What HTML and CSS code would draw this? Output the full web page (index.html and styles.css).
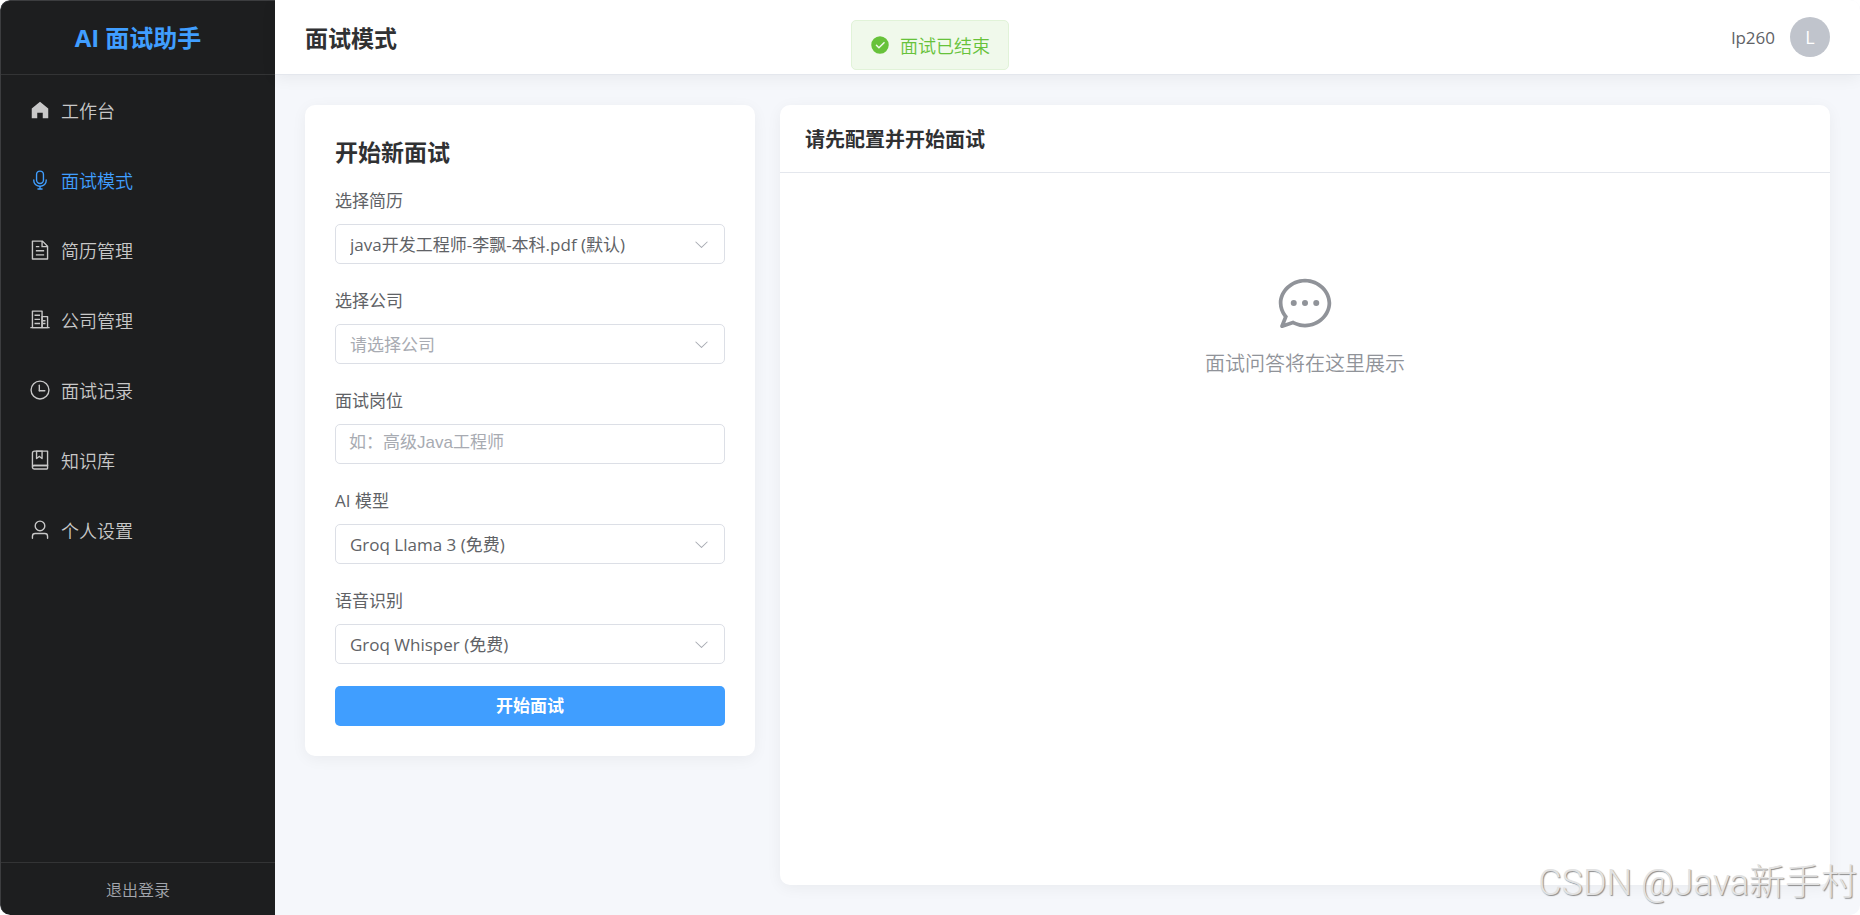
FILE: index.html
```html
<!DOCTYPE html>
<html lang="zh-CN">
  <head>
    <meta charset="UTF-8" />
    <meta name="viewport" content="width=device-width, initial-scale=1.0" />
    <title>AI 面试助手 - 面试模式</title>
    <link rel="stylesheet" href="styles.css">
  </head>
  <body>
    <div class="app">
      <!-- Sidebar -->
      <aside class="sidebar">
        <div class="logo">AI 面试助手</div>
        <nav class="menu">
          <a href="#" class="menu-item">
            <svg class="icon" viewBox="0 0 1024 1024"><path d="M512 128 128 447.936V896h255.936V640H640v256h255.936V447.936z" /></svg>
            <span>工作台</span>
          </a>
          <a href="#" class="menu-item active" aria-current="page">
            <svg class="icon" viewBox="0 0 1024 1024"><path d="M512 128a128 128 0 0 0-128 128v256a128 128 0 1 0 256 0V256a128 128 0 0 0-128-128m0-64a192 192 0 0 1 192 192v256a192 192 0 1 1-384 0V256A192 192 0 0 1 512 64m-32 832v-64a288 288 0 0 1-288-288v-32a32 32 0 0 1 64 0v32a224 224 0 0 0 224 224h64a224 224 0 0 0 224-224v-32a32 32 0 1 1 64 0v32a288 288 0 0 1-288 288v64h64a32 32 0 1 1 0 64H416a32 32 0 1 1 0-64z" /></svg>
            <span>面试模式</span>
          </a>
          <a href="#" class="menu-item">
            <svg class="icon" viewBox="0 0 1024 1024"><path d="M832 384H576V128H192v768h640zm-26.496-64L640 154.496V320zM160 64h480l256 256v608a32 32 0 0 1-32 32H160a32 32 0 0 1-32-32V96a32 32 0 0 1 32-32m160 448h384v64H320zm0-192h160v64H320zm0 384h384v64H320z" /></svg>
            <span>简历管理</span>
          </a>
          <a href="#" class="menu-item">
            <svg class="icon" viewBox="0 0 1024 1024">
              <path d="M192 128v704h384V128zm-32-64h448a32 32 0 0 1 32 32v768a32 32 0 0 1-32 32H160a32 32 0 0 1-32-32V96a32 32 0 0 1 32-32" />
              <path d="M256 256h256v64H256zm0 192h256v64H256zm0 192h256v64H256zm384-128h128v64H640zm0 128h128v64H640zM64 832h896v64H64z" />
              <path d="M640 384v448h192V384zm-32-64h256a32 32 0 0 1 32 32v512a32 32 0 0 1-32 32H608a32 32 0 0 1-32-32V352a32 32 0 0 1 32-32" />
            </svg>
            <span>公司管理</span>
          </a>
          <a href="#" class="menu-item">
            <svg class="icon" viewBox="0 0 1024 1024">
              <path d="M512 896a384 384 0 1 0 0-768 384 384 0 0 0 0 768m0 64a448 448 0 1 1 0-896 448 448 0 0 1 0 896" />
              <path d="M480 256a32 32 0 0 1 32 32v256a32 32 0 0 1-64 0V288a32 32 0 0 1 32-32" />
              <path d="M480 512h256q32 0 32 32t-32 32H480q-32 0-32-32t32-32" />
            </svg>
            <span>面试记录</span>
          </a>
          <a href="#" class="menu-item">
            <svg class="icon" viewBox="0 0 1024 1024">
              <path d="M192 736h640V128H256a64 64 0 0 0-64 64zm64-672h608a32 32 0 0 1 32 32v672a32 32 0 0 1-32 32H160l-32 57.536V192A128 128 0 0 1 256 64" />
              <path d="M240 800a48 48 0 1 0 0 96h592v-96zm0-64h656v160a64 64 0 0 1-64 64H240a112 112 0 0 1 0-224m144-608v250.88l96-76.8 96 76.8V128zm-64-64h320v381.44a32 32 0 0 1-51.968 24.96L480 384l-108.032 86.4A32 32 0 0 1 320 445.44z" />
            </svg>
            <span>知识库</span>
          </a>
          <a href="#" class="menu-item">
            <svg class="icon" viewBox="0 0 1024 1024"><path d="M512 512a192 192 0 1 0 0-384 192 192 0 0 0 0 384m0 64a256 256 0 1 1 0-512 256 256 0 0 1 0 512m320 320v-96a96 96 0 0 0-96-96H288a96 96 0 0 0-96 96v96a32 32 0 1 1-64 0v-96a160 160 0 0 1 160-160h448a160 160 0 0 1 160 160v96a32 32 0 1 1-64 0" /></svg>
            <span>个人设置</span>
          </a>
        </nav>
        <div class="sidebar-footer">
          <button type="button" class="btn-logout">退出登录</button>
        </div>
      </aside>

      <div class="page">
        <header class="topbar">
          <h1>面试模式</h1>
          <div class="user">
            <span>lp260</span>
            <span class="avatar">L</span>
          </div>
        </header>

        <main class="content">
          <!-- Interview setup -->
          <form class="card setup">
            <h2>开始新面试</h2>
            <div class="form-item">
              <label for="resume">选择简历</label>
              <div class="select">
                <select id="resume">
                  <option>java开发工程师-李飘-本科.pdf (默认)</option>
                </select>
                <svg class="arrow" viewBox="0 0 1024 1024"><path d="M831.872 340.864 512 652.672 192.128 340.864a30.592 30.592 0 0 0-42.752 0 29.12 29.12 0 0 0 0 41.6L489.664 714.24a32 32 0 0 0 44.672 0l340.288-331.712a29.12 29.12 0 0 0 0-41.728 30.592 30.592 0 0 0-42.752 0z" /></svg>
              </div>
            </div>
            <div class="form-item">
              <label for="company">选择公司</label>
              <div class="select">
                <select id="company" class="empty">
                  <option value="">请选择公司</option>
                </select>
                <svg class="arrow" viewBox="0 0 1024 1024"><path d="M831.872 340.864 512 652.672 192.128 340.864a30.592 30.592 0 0 0-42.752 0 29.12 29.12 0 0 0 0 41.6L489.664 714.24a32 32 0 0 0 44.672 0l340.288-331.712a29.12 29.12 0 0 0 0-41.728 30.592 30.592 0 0 0-42.752 0z" /></svg>
              </div>
            </div>
            <div class="form-item">
              <label for="position">面试岗位</label>
              <input type="text" id="position" placeholder="如：高级Java工程师" />
            </div>
            <div class="form-item">
              <label for="model">AI 模型</label>
              <div class="select">
                <select id="model">
                  <option>Groq Llama 3 (免费)</option>
                </select>
                <svg class="arrow" viewBox="0 0 1024 1024"><path d="M831.872 340.864 512 652.672 192.128 340.864a30.592 30.592 0 0 0-42.752 0 29.12 29.12 0 0 0 0 41.6L489.664 714.24a32 32 0 0 0 44.672 0l340.288-331.712a29.12 29.12 0 0 0 0-41.728 30.592 30.592 0 0 0-42.752 0z" /></svg>
              </div>
            </div>
            <div class="form-item">
              <label for="speech">语音识别</label>
              <div class="select">
                <select id="speech">
                  <option>Groq Whisper (免费)</option>
                </select>
                <svg class="arrow" viewBox="0 0 1024 1024"><path d="M831.872 340.864 512 652.672 192.128 340.864a30.592 30.592 0 0 0-42.752 0 29.12 29.12 0 0 0 0 41.6L489.664 714.24a32 32 0 0 0 44.672 0l340.288-331.712a29.12 29.12 0 0 0 0-41.728 30.592 30.592 0 0 0-42.752 0z" /></svg>
              </div>
            </div>
            <button type="button" class="btn-start">开始面试</button>
          </form>

          <!-- Questions and answers -->
          <section class="card session">
            <h2>请先配置并开始面试</h2>
            <div class="empty-state">
              <svg class="chat-icon" viewBox="0 0 1024 1024">
                <path d="m174.72 855.68 135.296-45.12 23.68 11.84C388.096 849.536 448.576 864 512 864c211.84 0 384-166.784 384-352S723.84 160 512 160 128 326.784 128 512c0 69.12 24.96 139.264 70.848 199.232l22.08 28.8-46.272 115.584zm-45.248 82.56A32 32 0 0 1 89.6 896l58.368-145.92C94.72 680.32 64 596.864 64 512 64 299.904 256 96 512 96s448 203.904 448 416-192 416-448 416a461.056 461.056 0 0 1-206.912-48.384l-175.616 58.56z" />
                <path d="M512 563.2a51.2 51.2 0 1 1 0-102.4 51.2 51.2 0 0 1 0 102.4m192 0a51.2 51.2 0 1 1 0-102.4 51.2 51.2 0 0 1 0 102.4m-384 0a51.2 51.2 0 1 1 0-102.4 51.2 51.2 0 0 1 0 102.4" />
              </svg>
              <p>面试问答将在这里展示</p>
            </div>
          </section>
        </main>
      </div>

      <div class="message" role="status">
        <svg class="message-icon" viewBox="0 0 1024 1024"><path d="M512 64a448 448 0 1 1 0 896 448 448 0 0 1 0-896m-55.808 536.384-99.52-99.584a38.4 38.4 0 1 0-54.336 54.336l126.72 126.72a38.272 38.272 0 0 0 54.336 0l262.4-262.464a38.4 38.4 0 1 0-54.272-54.336z" /></svg>
        <span>面试已结束</span>
      </div>
      <div class="watermark">CSDN @Java新手村</div>
    </div>
  </body>
</html>
```
FILE: styles.css
```css
* {
  margin: 0;
  padding: 0;
  box-sizing: border-box;
}

body {
  font-family: "Open Sans", "Noto Sans CJK SC", sans-serif;
  font-size: 17px;
  color: #606266;
  background-color: #fff;
}

button,
input,
select {
  font-family: inherit;
  font-size: inherit;
}

svg {
  fill: currentColor;
}

.app {
  position: relative;
  display: flex;
  min-height: 100vh;
  border-radius: 10px;
  overflow: hidden;
  background-color: #f5f7fb;
}

/* Sidebar */
.sidebar {
  display: flex;
  flex-direction: column;
  flex: 0 0 275px;
  background-color: #1d1e1f;
  border-left: 1px solid #3c3d3f;
  border-top: 1px solid #3c3d3f;
  border-radius: 10px 0 0 10px;
}

.logo {
  height: 74px;
  line-height: 74px;
  border-bottom: 1px solid #333435;
  text-align: center;
  font-size: 24px;
  font-weight: 700;
  color: #409eff;
}

.menu {
  flex: 1;
}

.menu-item {
  display: flex;
  align-items: center;
  gap: 10px;
  height: 70px;
  padding: 0 28px;
  font-size: 18px;
  font-weight: 350;
  color: #c8c8c8;
  text-decoration: none;
}

.menu-item.active,
.menu-item:hover {
  color: #409eff;
}

.icon {
  width: 22px;
  height: 22px;
}

.sidebar-footer {
  border-top: 1px solid #333435;
  text-align: center;
}

.btn-logout {
  height: 52px;
  padding: 0 20px;
  border: none;
  background: none;
  font-size: 16px;
  font-weight: 350;
  color: #a3a6ad;
  cursor: pointer;
}

/* Top bar */
.page {
  display: flex;
  flex-direction: column;
  flex: 1;
  min-width: 0;
}

.topbar {
  display: flex;
  justify-content: space-between;
  align-items: center;
  height: 75px;
  padding: 0 30px;
  background-color: #fff;
  border-bottom: 1px solid #e4e7ed;
  box-shadow: 0 3px 15px rgba(0, 0, 0, 0.06);
}

h1 {
  font-size: 23px;
  color: #303133;
}

.user {
  display: flex;
  align-items: center;
  gap: 15px;
}

.avatar {
  width: 40px;
  height: 40px;
  line-height: 40px;
  border-radius: 50%;
  background-color: #c0c4cc;
  color: #fff;
  font-size: 18px;
  text-align: center;
}

/* Content */
.content {
  display: flex;
  flex: 1;
  gap: 25px;
  padding: 30px;
}

.card {
  background-color: #fff;
  border-radius: 10px;
  box-shadow: 0 3px 15px rgba(0, 0, 0, 0.05);
}

.setup {
  flex: 0 0 450px;
  align-self: flex-start;
  padding: 30px;
}

.setup h2 {
  margin-bottom: 18px;
  line-height: 34px;
  font-size: 23px;
  color: #303133;
}

.form-item {
  margin-bottom: 23px;
}

.form-item label {
  display: block;
  margin-bottom: 9px;
  line-height: 28px;
}

.form-item:last-of-type {
  margin-bottom: 22px;
}

.select {
  display: grid;
  align-items: center;
}

.select select,
.select .arrow {
  grid-area: 1 / 1;
}

select,
input {
  width: 100%;
  height: 40px;
  padding: 0 14px;
  border: 1px solid #dcdfe6;
  border-radius: 5px;
  background-color: #fff;
  color: #606266;
  outline: none;
}

input {
  display: block;
  padding: 0 13px 2px;
  font-family: "Liberation Sans", "Noto Sans CJK SC", sans-serif;
}

select {
  appearance: none;
  cursor: pointer;
}

select:focus,
input:focus {
  border-color: #409eff;
}

select.empty,
input::placeholder {
  color: #a8abb2;
}

.arrow {
  justify-self: end;
  width: 17px;
  height: 17px;
  margin-right: 15px;
  color: #a8abb2;
  pointer-events: none;
}

.btn-start {
  display: block;
  width: 100%;
  height: 40px;
  padding-bottom: 4px;
  border: none;
  border-radius: 5px;
  background-color: #409eff;
  color: #fff;
  font-weight: 700;
  cursor: pointer;
}
.btn-start:hover {
  background-color: #79bbff;
}

.session {
  flex: 1;
  min-width: 0;
}

.session h2 {
  padding: 20px 25px 17px;
  border-bottom: 1px solid #e4e7ed;
  line-height: 30px;
  font-size: 20px;
  color: #303133;
}

.empty-state {
  padding: 100px 25px;
  text-align: center;
  font-size: 20px;
  font-weight: 350;
  color: #909399;
}

.chat-icon {
  display: block;
  width: 60px;
  height: 60px;
  margin: 0 auto 16px;
}

.empty-state p {
  line-height: 30px;
}

/* Message and watermark lie over the page */
.message {
  position: absolute;
  top: 20px;
  left: 50%;
  transform: translateX(-50%);
  display: flex;
  align-items: center;
  gap: 10px;
  height: 50px;
  padding: 0 18px;
  border: 1px solid #e1f3d8;
  border-radius: 5px;
  background-color: #f0f9eb;
  color: #67c23a;
  font-size: 18px;
  font-weight: 350;
}

.message-icon {
  width: 20px;
  height: 20px;
}

.watermark {
  position: absolute;
  right: 3px;
  bottom: 8px;
  line-height: 48px;
  font-family: Roboto, "Noto Sans CJK SC", sans-serif;
  font-size: 36px;
  font-weight: 300;
  color: #e2e2e2;
  text-shadow: 1px 1px 1px #8c8c8c;
  pointer-events: none;
}
```
